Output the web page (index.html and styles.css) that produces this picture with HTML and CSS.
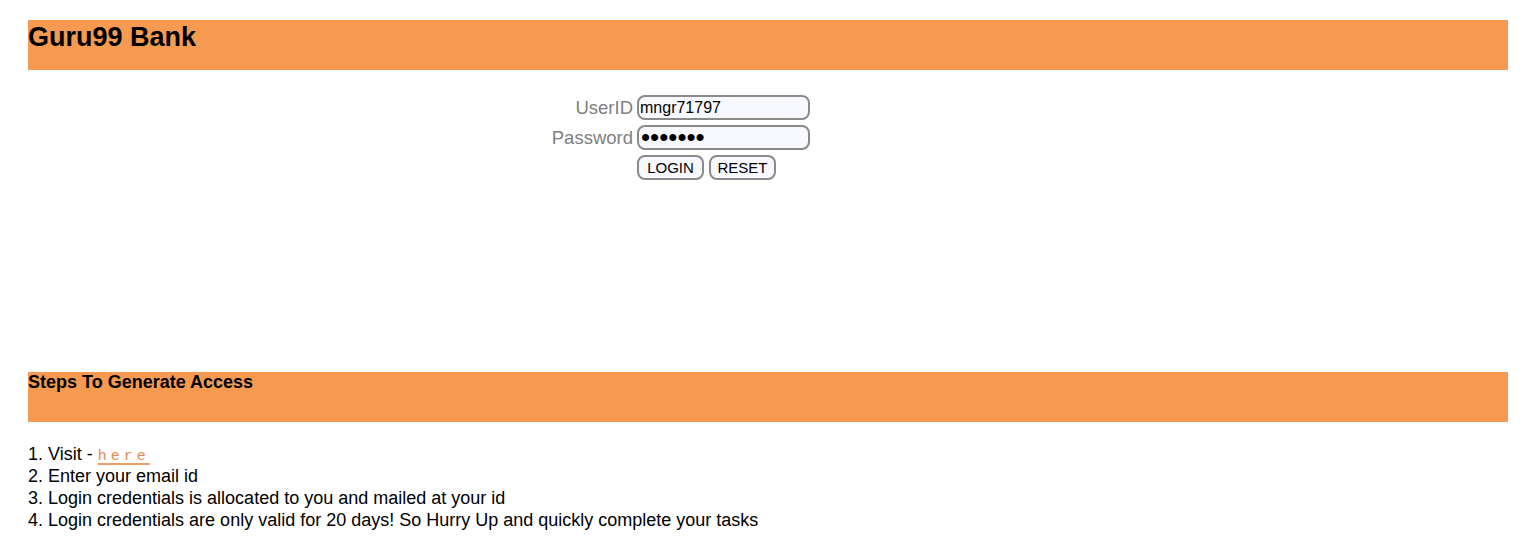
FILE: index.html
```html
<!DOCTYPE html>
<html>
<head>
<meta charset="utf-8">
<title>Guru99 Bank</title>
<link rel="stylesheet" href="styles.css">
</head>
<body>
<div class="banner">
  <h2 class="brand">Guru99 Bank</h2>
</div>
<form class="login">
  <label class="lbl" for="uid">UserID</label>
  <input class="field" id="uid" type="text" value="mngr71797">
  <label class="lbl" for="pwd">Password</label>
  <input class="field pass" id="pwd" type="password" value="1234567">
  <span class="lbl"></span>
  <div class="actions">
    <button class="btn" type="button">LOGIN</button>
    <button class="btn" type="button">RESET</button>
  </div>
</form>
<div class="banner steps-bar">
  <h4 class="steps-title">Steps To Generate Access</h4>
</div>
<div class="steps">
  <div>1. Visit - <a class="here" href="#">here</a></div>
  <div>2. Enter your email id</div>
  <div>3. Login credentials is allocated to you and mailed at your id</div>
  <div>4. Login credentials are only valid for 20 days! So Hurry Up and quickly complete your tasks</div>
</div>
</body>
</html>
```
FILE: styles.css
```css
html, body {
  margin: 0;
  background: #ffffff;
}
body {
  padding: 20px 28px;
  font-family: "Liberation Sans", Arial, sans-serif;
  color: #000;
}
.banner {
  background: #f79a51;
  height: 50px;
}
.brand {
  margin: 0;
  padding-top: 2px;
  font-size: 27px;
  font-weight: bold;
  line-height: 31px;
}
.login {
  margin: 25px 0 0;
  display: grid;
  grid-template-columns: 605px 173px;
  column-gap: 4px;
  row-gap: 5px;
  align-items: center;
}
.lbl {
  text-align: right;
  color: #808080;
  font-size: 18.5px;
  line-height: 25px;
}
.field {
  box-sizing: border-box;
  width: 173px;
  height: 25px;
  margin: 0;
  padding: 0 2px 0 1px;
  border: 2px solid #8a8a8a;
  border-radius: 8px;
  background: #f8f8ff;
  font-family: "Liberation Sans", Arial, sans-serif;
  font-size: 16px;
  color: #000;
  outline: none;
}
.pass {
  font-size: 26px;
  padding-left: 2px;
}
.actions {
  display: flex;
  gap: 5px;
}
.btn {
  box-sizing: border-box;
  width: 67px;
  height: 25px;
  margin: 0;
  padding: 0;
  border: 2px solid #8a8a8a;
  border-radius: 8px;
  background: #f8f8ff;
  font-family: "Liberation Sans", Arial, sans-serif;
  font-size: 15px;
  color: #000;
}
.steps-bar {
  margin-top: 192px;
}
.steps-title {
  margin: 0;
  font-size: 18px;
  font-weight: bold;
  line-height: 21px;
}
.steps {
  margin-top: 21px;
  font-size: 18px;
  line-height: 22px;
}
.here {
  color: #e8894f;
  font-family: "Liberation Mono", monospace;
  font-size: 15px;
  line-height: 1;
  letter-spacing: 4px;
  text-decoration: underline;
  text-decoration-color: #ef9c63;
  text-decoration-thickness: 2px;
  text-underline-offset: 3px;
}
```
